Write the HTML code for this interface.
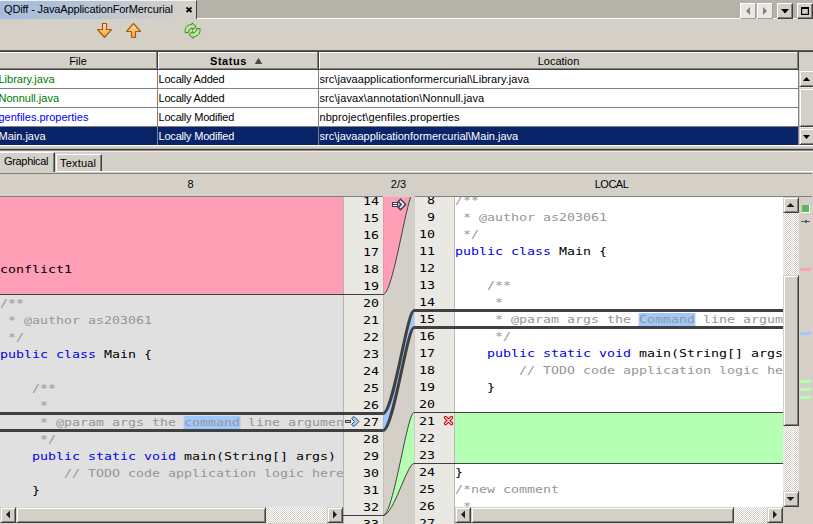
<!DOCTYPE html>
<html><head><meta charset="utf-8"><title>QDiff - JavaApplicationForMercurial</title>
<style>
html,body{margin:0;padding:0}
body{width:813px;height:524px;overflow:hidden;background:#d4d0c8;position:relative;font-family:"Liberation Sans",sans-serif;font-size:11px;color:#000}
div,span,svg{box-sizing:border-box}
.a{position:absolute}
.t{position:absolute;white-space:pre;line-height:13px;height:13px}
.code{position:absolute;white-space:pre;font-family:"DejaVu Sans Mono","Liberation Mono",monospace;font-size:11px;line-height:17px;height:17px;overflow:hidden;transform:scaleX(1.2081);transform-origin:0 0}
.ln{position:absolute;white-space:pre;font-family:"DejaVu Sans Mono","Liberation Mono",monospace;font-size:11px;line-height:17px;height:17px;text-align:right;transform:scaleX(1.2081);transform-origin:100% 0}
.c{color:#969696}
.k{color:#0000e6}
.hl{background:#a0c8ff}
.btn{position:absolute;background:#d4d0c8;border:1px solid;border-color:#d4d0c8 #404040 #404040 #d4d0c8;box-shadow:inset 1px 1px 0 #fff,inset -1px -1px 0 #808080}
.btn2{position:absolute;background:#d4d0c8;border:1px solid;border-color:#fff #404040 #404040 #fff;box-shadow:inset -1px -1px 0 #808080}
.chk{background-color:#fff;background-image:linear-gradient(45deg,#d4d0c8 25%,transparent 25%,transparent 75%,#d4d0c8 75%),linear-gradient(45deg,#d4d0c8 25%,transparent 25%,transparent 75%,#d4d0c8 75%);background-size:2px 2px;background-position:0 0,1px 1px}
</style></head><body>

<div class="a" style="left:0;top:0;width:813px;height:18px;background:#b5b2a9"></div>
<div class="a" style="left:197px;top:18px;width:616px;height:1px;background:#fff"></div>
<div class="a" style="left:0;top:0;width:197px;height:19px;background:linear-gradient(90deg,#a5bcdc 0%,#b4c3d6 40%,#d4d0c8 95%);border-top:1px solid #eef2f8;border-right:1px solid #404040"></div>
<div class="t" style="left:4px;top:3px;letter-spacing:-0.13px">QDiff - JavaApplicationForMercurial</div>
<svg class="a" style="left:185px;top:6px" width="9" height="8" viewBox="0 0 9 8"><path d="M1.5 1.5L6.5 6M6.5 1.5L1.5 6" stroke="#000" stroke-width="1.7" fill="none"/></svg>
<div class="a" style="left:740px;top:3px;width:16px;height:16px;background:#e9e7e2;border:1px solid;border-color:#fff #a0a0a0 #a0a0a0 #fff"></div>
<div class="a" style="left:757px;top:3px;width:16px;height:16px;background:#e9e7e2;border:1px solid;border-color:#fff #a0a0a0 #a0a0a0 #fff"></div>
<svg class="a" style="left:740px;top:3px" width="33" height="16"><path d="M10 4L6 8L10 12Z" fill="#808080"/><path d="M23 4L27 8L23 12Z" fill="#808080"/></svg>
<div class="btn2" style="left:777px;top:3px;width:16px;height:16px"></div>
<svg class="a" style="left:777px;top:3px" width="16" height="16"><path d="M4 6L12 6L8 10.5Z" fill="#000"/></svg>
<div class="btn2" style="left:797px;top:3px;width:16px;height:16px"></div>
<svg class="a" style="left:797px;top:3px" width="16" height="16"><rect x="4.6" y="5" width="6.8" height="6.4" fill="none" stroke="#000" stroke-width="1.2"/><rect x="4" y="4" width="8" height="2" fill="#000"/></svg>
<svg class="a" style="left:90px;top:18px" width="120" height="26" viewBox="90 18 120 26">
<defs><linearGradient id="og" x1="0" y1="0" x2="0" y2="1"><stop offset="0" stop-color="#ffe0b0"/><stop offset="1" stop-color="#f2a230"/></linearGradient>
<linearGradient id="gg" x1="0" y1="0" x2="1" y2="1"><stop offset="0" stop-color="#e4fad2"/><stop offset="1" stop-color="#86d456"/></linearGradient></defs>
<path d="M102.5 23.5H106.5V29.5H111.5L104.5 37.5L97.5 29.5H102.5Z" fill="url(#og)" stroke="#a85a08" stroke-width="1.15" stroke-linejoin="round"/>
<path d="M133.5 23.5L140.5 31.5H135.5V37.5H131.5V31.5H126.5Z" fill="url(#og)" stroke="#a85a08" stroke-width="1.15" stroke-linejoin="round"/>
<g fill="url(#gg)" stroke="#2f8410" stroke-width="0.95" stroke-linejoin="round">
<path id="rf" d="M185.2 32.6L185.2 30.5C185.2 27 188 24.6 192 24.4L192 22.8L196.2 26.5L192.3 29.8L192.3 28.1C190 28.3 188.7 30 188.7 32.6Z"/>
<path d="M185.2 32.6L185.2 30.5C185.2 27 188 24.6 192 24.4L192 22.8L196.2 26.5L192.3 29.8L192.3 28.1C190 28.3 188.7 30 188.7 32.6Z" transform="rotate(180 192.6 30.6)"/>
</g>
</svg>
<div class="a" style="left:0;top:50px;width:813px;height:1px;background:#5a5a5a"></div>
<div class="a" style="left:0;top:51px;width:813px;height:1px;background:#404040"></div>
<div class="a" style="left:0;top:52px;width:799px;height:1px;background:#fff"></div>
<div class="a" style="left:0px;top:52px;width:158px;height:18px;border-right:1px solid #404040;border-bottom:1px solid #404040;box-shadow:inset -1px -1px 0 #808080"></div>
<div class="a" style="left:158px;top:52px;width:161px;height:18px;border-right:1px solid #404040;border-bottom:1px solid #404040;box-shadow:inset -1px -1px 0 #808080"></div>
<div class="a" style="left:158px;top:52px;width:1px;height:17px;background:#fff"></div>
<div class="a" style="left:319px;top:52px;width:480px;height:18px;border-right:1px solid #404040;border-bottom:1px solid #404040;box-shadow:inset -1px -1px 0 #808080"></div>
<div class="a" style="left:319px;top:52px;width:1px;height:17px;background:#fff"></div>
<div class="t" style="left:0;top:55px;width:156px;text-align:center">File</div>
<div class="t" style="left:210px;top:55px;font-weight:bold;letter-spacing:0.55px">Status</div>
<svg class="a" style="left:254px;top:57px" width="9" height="8"><path d="M0.8 7L4.5 0.8L8.2 7Z" fill="#484848"/></svg>
<div class="t" style="left:319px;top:55px;width:479px;text-align:center">Location</div>
<div class="a" style="left:0;top:70px;width:799px;height:75px;background:#fff"></div>
<div class="a" style="left:0;top:88px;width:799px;height:1px;background:#808080"></div>
<div class="t" style="left:-1.5px;top:73px;color:#007800">Library.java</div>
<div class="t" style="left:158.5px;top:73px;color:#000;letter-spacing:-0.2px">Locally Added</div>
<div class="t" style="left:319.5px;top:73px;color:#000;letter-spacing:0.045px">src\javaapplicationformercurial\Library.java</div>
<div class="a" style="left:0;top:107px;width:799px;height:1px;background:#808080"></div>
<div class="t" style="left:-1.5px;top:92px;color:#007800">Nonnull.java</div>
<div class="t" style="left:158.5px;top:92px;color:#000;letter-spacing:-0.2px">Locally Added</div>
<div class="t" style="left:319.5px;top:92px;color:#000;letter-spacing:0.1px">src\javax\annotation\Nonnull.java</div>
<div class="a" style="left:0;top:126px;width:799px;height:1px;background:#808080"></div>
<div class="t" style="left:-1.5px;top:111px;color:#0000ff">genfiles.properties</div>
<div class="t" style="left:158.5px;top:111px;color:#000;letter-spacing:-0.2px">Locally Modified</div>
<div class="t" style="left:319.5px;top:111px;color:#000;letter-spacing:0.065px">nbproject\genfiles.properties</div>
<div class="a" style="left:0;top:127px;width:799px;height:18px;background:#0a246a"></div>
<div class="t" style="left:-1.5px;top:130px;color:#fff">Main.java</div>
<div class="t" style="left:158.5px;top:130px;color:#fff;letter-spacing:-0.2px">Locally Modified</div>
<div class="t" style="left:319.5px;top:130px;color:#fff;letter-spacing:0px">src\javaapplicationformercurial\Main.java</div>
<div class="a" style="left:157px;top:70px;width:1px;height:75px;background:#808080"></div>
<div class="a" style="left:318px;top:70px;width:1px;height:75px;background:#808080"></div>
<div class="a" style="left:798px;top:70px;width:1px;height:75px;background:#808080"></div>
<div class="a chk" style="left:799px;top:70px;width:14px;height:75px"></div>
<div class="btn" style="left:799px;top:70px;width:16px;height:17px"></div>
<div class="btn" style="left:799px;top:88px;width:16px;height:39px"></div>
<div class="btn" style="left:799px;top:128px;width:16px;height:17px"></div>
<svg class="a" style="left:799px;top:70px" width="14" height="76"><path d="M4 11L7.5 7L11 11Z" fill="#000"/><path d="M4 65L11 65L7.5 69Z" fill="#000"/></svg>
<div class="a" style="left:0;top:145px;width:813px;height:1px;background:#fff"></div>
<div class="a" style="left:0;top:148px;width:813px;height:1px;background:#b4b1aa"></div>
<div class="a" style="left:0;top:149px;width:813px;height:1px;background:#404040"></div>
<div class="a" style="left:0;top:150px;width:813px;height:1px;background:#8c8a86"></div>
<div class="a" style="left:0;top:151px;width:813px;height:1px;background:#efede8"></div>
<div class="a" style="left:55px;top:171px;width:758px;height:1px;background:#fff"></div>
<div class="a" style="left:0;top:173px;width:812px;height:1px;background:#808080"></div>
<div class="a" style="left:0;top:152px;width:55px;height:20px;border-top:1px solid #fff;border-right:1px solid #404040;box-shadow:inset -1px 0 0 #808080"></div>
<div class="a" style="left:56px;top:154px;width:46px;height:17px;border-top:1px solid #fff;border-left:1px solid #fff;border-right:1px solid #404040;box-shadow:inset -1px 0 0 #808080"></div>
<div class="t" style="left:4px;top:155px;letter-spacing:-0.33px">Graphical</div>
<div class="t" style="left:60px;top:157px;letter-spacing:0.2px">Textual</div>
<div class="t" style="left:0;top:178px;width:381px;text-align:center">8</div>
<div class="t" style="left:383px;top:178px;width:31px;text-align:center">2/3</div>
<div class="t" style="left:412px;top:178px;width:399px;text-align:center;letter-spacing:-0.5px">LOCAL</div>
<div class="a" style="left:0;top:196px;width:383px;height:328px;overflow:hidden">
<div class="a" style="left:0;top:0;width:343px;height:311px;background:#e0e0e0"></div>
<div class="a" style="left:0;top:0;width:343px;height:98px;background:#ff9fb5"></div>
<div class="a" style="left:343px;top:0;width:40px;height:328px;background:#e9e8e2;border-left:1px solid #b4b4b4"></div>
<div class="ln" style="left:343px;top:-3px;width:36px">14</div>
<div class="ln" style="left:343px;top:14px;width:36px">15</div>
<div class="ln" style="left:343px;top:31px;width:36px">16</div>
<div class="ln" style="left:343px;top:48px;width:36px">17</div>
<div class="ln" style="left:343px;top:65px;width:36px">18</div>
<div class="ln" style="left:343px;top:82px;width:36px">19</div>
<div class="ln" style="left:343px;top:99px;width:36px">20</div>
<div class="ln" style="left:343px;top:116px;width:36px">21</div>
<div class="ln" style="left:343px;top:133px;width:36px">22</div>
<div class="ln" style="left:343px;top:150px;width:36px">23</div>
<div class="ln" style="left:343px;top:167px;width:36px">24</div>
<div class="ln" style="left:343px;top:184px;width:36px">25</div>
<div class="ln" style="left:343px;top:201px;width:36px">26</div>
<div class="ln" style="left:343px;top:218px;width:36px">27</div>
<div class="ln" style="left:343px;top:235px;width:36px">28</div>
<div class="ln" style="left:343px;top:252px;width:36px">29</div>
<div class="ln" style="left:343px;top:269px;width:36px">30</div>
<div class="ln" style="left:343px;top:286px;width:36px">31</div>
<div class="ln" style="left:343px;top:303px;width:36px">32</div>
<div class="ln" style="left:343px;top:320px;width:36px">33</div>
<div class="ln" style="left:343px;top:337px;width:36px">34</div>
<div class="a" style="left:0;top:0;width:343px;height:311px;overflow:hidden">
<div class="code" style="left:-0.5px;top:65px;width:284.4px">conflict1</div>
<div class="code" style="left:-0.5px;top:99px;width:284.4px"><span class="c">/**</span></div>
<div class="code" style="left:-0.5px;top:116px;width:284.4px"><span class="c"> * @author as203061</span></div>
<div class="code" style="left:-0.5px;top:133px;width:284.4px"><span class="c"> */</span></div>
<div class="code" style="left:-0.5px;top:150px;width:284.4px"><span class="k">public class</span> Main {</div>
<div class="code" style="left:-0.5px;top:184px;width:284.4px"><span class="c">    /**</span></div>
<div class="code" style="left:-0.5px;top:201px;width:284.4px"><span class="c">     *</span></div>
<div class="code" style="left:-0.5px;top:218px;width:284.4px"><span class="c">     * @param args the </span><span class="c hl">command</span><span class="c"> line arguments</span></div>
<div class="code" style="left:-0.5px;top:235px;width:284.4px"><span class="c">     */</span></div>
<div class="code" style="left:-0.5px;top:252px;width:284.4px">    <span class="k">public static void</span> main(String[] args) {</div>
<div class="code" style="left:-0.5px;top:269px;width:284.4px"><span class="c">        // TODO code application logic here</span></div>
<div class="code" style="left:-0.5px;top:286px;width:284.4px">    }</div>
</div>
</div>
<div class="a chk" style="left:0;top:507px;width:343px;height:16px"></div>
<div class="btn" style="left:0;top:507px;width:16px;height:16px"></div>
<div class="btn" style="left:16px;top:507px;width:250px;height:16px"></div>
<div class="btn" style="left:327px;top:507px;width:16px;height:16px"></div>
<svg class="a" style="left:0;top:507px" width="343" height="16"><path d="M10 3.5L6 7.5L10 11.5Z" fill="#202020"/><path d="M333 3.5L337 7.5L333 11.5Z" fill="#202020"/></svg>
<div class="a" style="left:414px;top:196px;width:386px;height:328px;overflow:hidden">
<div class="a" style="left:41px;top:0;width:328px;height:311px;background:#fff"></div>
<div class="a" style="left:0;top:0;width:41px;height:328px;background:#e9e8e2;border-left:1px solid #cdcdd0;border-right:1px solid #b8b8b8"></div>
<div class="a" style="left:41px;top:217px;width:328px;height:50px;background:#b4ffb4"></div>
<div class="ln" style="left:0;top:-4px;width:21px">8</div>
<div class="ln" style="left:0;top:13px;width:21px">9</div>
<div class="ln" style="left:0;top:30px;width:21px">10</div>
<div class="ln" style="left:0;top:47px;width:21px">11</div>
<div class="ln" style="left:0;top:64px;width:21px">12</div>
<div class="ln" style="left:0;top:81px;width:21px">13</div>
<div class="ln" style="left:0;top:98px;width:21px">14</div>
<div class="ln" style="left:0;top:115px;width:21px">15</div>
<div class="ln" style="left:0;top:132px;width:21px">16</div>
<div class="ln" style="left:0;top:149px;width:21px">17</div>
<div class="ln" style="left:0;top:166px;width:21px">18</div>
<div class="ln" style="left:0;top:183px;width:21px">19</div>
<div class="ln" style="left:0;top:200px;width:21px">20</div>
<div class="ln" style="left:0;top:217px;width:21px">21</div>
<div class="ln" style="left:0;top:234px;width:21px">22</div>
<div class="ln" style="left:0;top:251px;width:21px">23</div>
<div class="ln" style="left:0;top:268px;width:21px">24</div>
<div class="ln" style="left:0;top:285px;width:21px">25</div>
<div class="ln" style="left:0;top:302px;width:21px">26</div>
<div class="ln" style="left:0;top:319px;width:21px">27</div>
<div class="ln" style="left:0;top:336px;width:21px">28</div>
<div class="a" style="left:41px;top:0;width:328px;height:311px;overflow:hidden">
<div class="code" style="left:-0.5px;top:-4px;width:271.9px"><span class="c">/**</span></div>
<div class="code" style="left:-0.5px;top:13px;width:271.9px"><span class="c"> * @author as203061</span></div>
<div class="code" style="left:-0.5px;top:30px;width:271.9px"><span class="c"> */</span></div>
<div class="code" style="left:-0.5px;top:47px;width:271.9px"><span class="k">public class</span> Main {</div>
<div class="code" style="left:-0.5px;top:81px;width:271.9px"><span class="c">    /**</span></div>
<div class="code" style="left:-0.5px;top:98px;width:271.9px"><span class="c">     *</span></div>
<div class="code" style="left:-0.5px;top:115px;width:271.9px"><span class="c">     * @param args the </span><span class="c hl">Command</span><span class="c"> line arguments</span></div>
<div class="code" style="left:-0.5px;top:132px;width:271.9px"><span class="c">     */</span></div>
<div class="code" style="left:-0.5px;top:149px;width:271.9px">    <span class="k">public static void</span> main(String[] args) {</div>
<div class="code" style="left:-0.5px;top:166px;width:271.9px"><span class="c">        // TODO code application logic here</span></div>
<div class="code" style="left:-0.5px;top:183px;width:271.9px">    }</div>
<div class="code" style="left:-0.5px;top:268px;width:271.9px">}</div>
<div class="code" style="left:-0.5px;top:285px;width:271.9px"><span class="c">/*new comment</span></div>
<div class="code" style="left:-0.5px;top:302px;width:271.9px"><span class="c"> *</span></div>
<div class="code" style="left:-0.5px;top:319px;width:271.9px"><span class="c"> */</span></div>
</div>
</div>
<div class="a chk" style="left:783px;top:196px;width:16px;height:311px"></div>
<div class="btn" style="left:783px;top:197px;width:16px;height:16px"></div>
<div class="btn" style="left:783px;top:275px;width:16px;height:151px"></div>
<div class="btn" style="left:783px;top:491px;width:16px;height:16px"></div>
<svg class="a" style="left:783px;top:196px" width="16" height="311"><path d="M3.5 11L7.5 7L11.5 11Z" fill="#202020"/><path d="M3.5 301L11.5 301L7.5 305Z" fill="#202020"/></svg>
<div class="a chk" style="left:455px;top:507px;width:328px;height:16px"></div>
<div class="btn" style="left:455px;top:507px;width:16px;height:16px"></div>
<div class="btn" style="left:471px;top:507px;width:263px;height:16px"></div>
<div class="btn" style="left:767px;top:507px;width:16px;height:16px"></div>
<svg class="a" style="left:454px;top:507px" width="329" height="16"><path d="M11 3.5L7 7.5L11 11.5Z" fill="#202020"/><path d="M319 3.5L323 7.5L319 11.5Z" fill="#202020"/></svg>
<div class="a" style="left:802px;top:205px;width:8px;height:8px;background:#5cb85c;border-right:1px solid #fff;border-bottom:1px solid #fff"></div>
<div class="a" style="left:801px;top:221px;width:9px;height:1px;background:#606060"></div>
<div class="a" style="left:804.5px;top:220px;width:2px;height:3px;background:#505860"></div>
<div class="a" style="left:800px;top:268px;width:11px;height:3px;background:#ff9fb5"></div>
<div class="a" style="left:800px;top:332px;width:11px;height:3px;background:#a0c8ff"></div>
<div class="a" style="left:800px;top:380px;width:11px;height:3px;background:#b4ffb4"></div>
<div class="a" style="left:800px;top:388px;width:11px;height:3px;background:#b4ffb4"></div>
<div class="a" style="left:800px;top:396px;width:11px;height:3px;background:#b4ffb4"></div>
<svg class="a" style="left:0;top:196px" width="813" height="328" viewBox="0 196 813 328">
<path d="M0 196.5H383M415 196.5H812" stroke="#808080" stroke-width="1"/>
<path d="M383 180H414V191 C407 191 393.5 294 383 294 Z" fill="#ff9fb5"/>
<path d="M0 294.5H383" stroke="#404040" stroke-width="1"/>
<path d="M383 294 C393.5 294 407 191 414 191" fill="none" stroke="#404040" stroke-width="1" transform="translate(0,0.5)"/>
<path d="M383 515 C393.5 515 407 412 414 412 L414 463 C407 463 393.5 515 383 515 Z" fill="#b4ffb4"/>
<path d="M343 515.5H383M414 412.5H783M414 463.5H783" stroke="#404040" stroke-width="1"/>
<path d="M383 515 C393.5 515 407 412 414 412" fill="none" stroke="#404040" stroke-width="1" transform="translate(0,0.5)"/>
<path d="M383 515 C393.5 515 407 463 414 463" fill="none" stroke="#404040" stroke-width="1" transform="translate(0,0.5)"/>
<path d="M383 413.5 C393.5 413.5 407 310.5 414 310.5 L414 327.5 C407 327.5 393.5 430.5 383 430.5 Z" fill="#a0c8ff"/>
<path d="M0 413.5H383 C393.5 413.5 407 310.5 414 310.5 H783" fill="none" stroke="#404040" stroke-width="3"/>
<path d="M0 430.5H383 C393.5 430.5 407 327.5 414 327.5 H783" fill="none" stroke="#404040" stroke-width="3"/>
<rect x="383" y="196" width="31" height="1" fill="#d4d0c8"/>
<rect x="383" y="197" width="1" height="327" fill="#8090a8" fill-opacity="0.28"/>
<g stroke="#36445a" stroke-width="1" fill="#fff"><rect x="392.5" y="202.5" width="5" height="4"/><path d="M392.5 204.5H397.5" /><path d="M398.3 201.5L400.6 199.3L405.6 204.4L400.6 209.6L398.3 207.4L401.3 204.4Z" stroke-width="1.5"/></g>
<g stroke="#3c4a5c" stroke-width="1" fill="#9fd0ff"><rect x="345.5" y="420.5" width="5" height="2" fill="#9fc8f0"/><path d="M351.5 418.5L354 416.5L359 421.5L354 426.5L351.5 424.5L354.5 421.5Z"/></g>
<g stroke-linecap="round" fill="none"><path d="M445.5 417.5L451.5 423.5M451.5 417.5L445.5 423.5" stroke="#c80000" stroke-width="3.3"/><path d="M445.5 417.5L451.5 423.5M451.5 417.5L445.5 423.5" stroke="#ffd6d6" stroke-width="1.3"/></g>
</svg>
</body></html>
